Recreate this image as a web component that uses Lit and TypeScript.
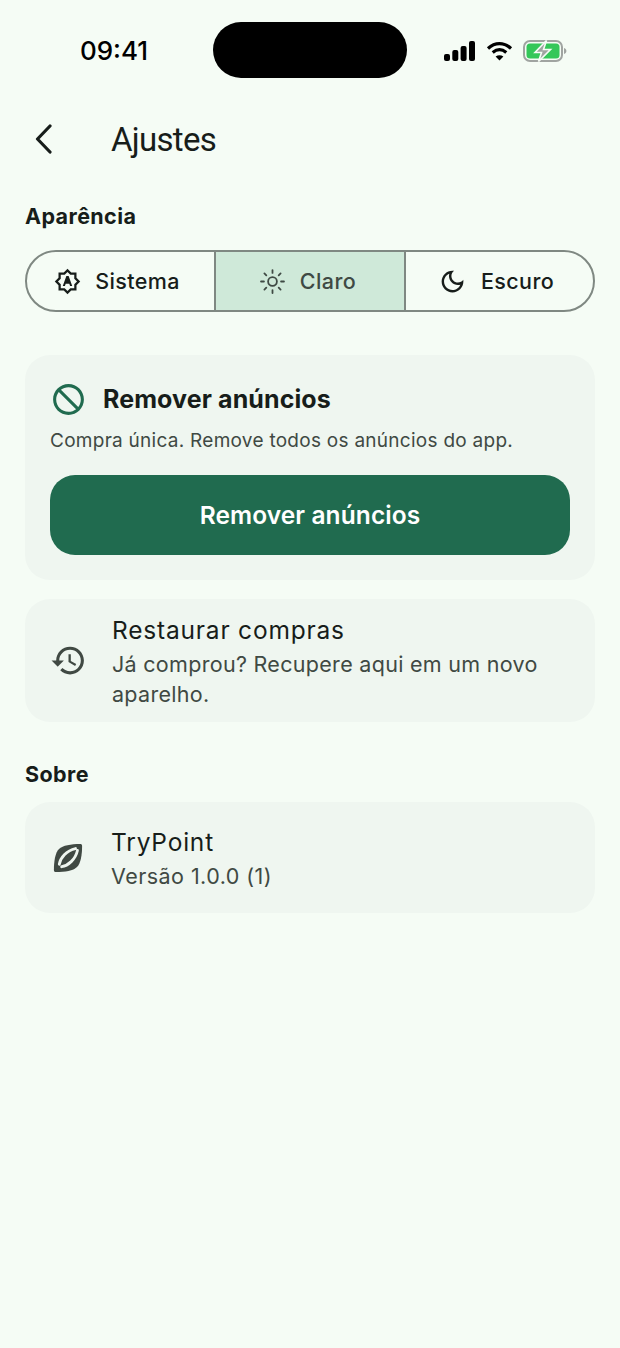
import { LitElement, html, css } from "lit";
import { customElement } from "lit/decorators.js";

const P = {
  auto: "M10.85 12.65h2.3L12 9l-1.15 3.65zM20 8.69V4h-4.69L12 .69 8.69 4H4v4.69L.69 12 4 15.31V20h4.69L12 23.31 15.31 20H20v-4.69L23.31 12 20 8.69zm-2 5.79V18h-3.52L12 20.48 9.52 18H6v-3.52L3.52 12 6 9.52V6h3.52L12 3.52 14.48 6H18v3.52L20.48 12 18 14.48zM11 7l-3.2 9h1.9l.7-2h3.2l.7 2h1.9L13 7h-2z",
  moon: "M9.37 5.51c-.18.64-.27 1.31-.27 1.99 0 4.08 3.32 7.4 7.4 7.4.68 0 1.35-.09 1.99-.27C17.45 17.19 14.93 19 12 19c-3.86 0-7-3.14-7-7 0-2.93 1.81-5.45 4.37-6.49zM12 3c-4.97 0-9 4.03-9 9s4.03 9 9 9 9-4.03 9-9c0-.46-.04-.92-.1-1.36-.98 1.37-2.58 2.26-4.4 2.26-2.98 0-5.4-2.42-5.4-5.4 0-1.81.89-3.42 2.26-4.4-.44-.06-.9-.1-1.36-.1z",
  block: "M12 2C6.48 2 2 6.48 2 12s4.48 10 10 10 10-4.48 10-10S17.52 2 12 2zM4 12c0-4.42 3.58-8 8-8 1.85 0 3.55.63 4.9 1.69L5.69 16.9C4.63 15.55 4 13.85 4 12zm8 8c-1.85 0-3.55-.63-4.9-1.69L18.31 7.1C19.37 8.45 20 10.15 20 12c0 4.42-3.58 8-8 8z",
  restore: "M13 3c-4.97 0-9 4.03-9 9H1l3.89 3.89.07.14L9 12H6c0-3.87 3.13-7 7-7s7 3.13 7 7-3.13 7-7 7c-1.93 0-3.68-.79-4.94-2.06l-1.42 1.42C8.27 19.99 10.51 21 13 21c4.97 0 9-4.03 9-9s-4.03-9-9-9zm-1 5v5l4.28 2.54.72-1.21-3.5-2.08V8H12z",
};

const fill = (d: string, size: number, color: string) => html`<svg class="ic" width=${size} height=${size} viewBox="0 0 24 24" fill=${color}><path d=${d}></path></svg>`;

const block = html`<svg class="ic" width="37" height="37" viewBox="0 0 24 24" fill="#206b4f"><path transform="matrix(-1 0 0 1 24 0)" d=${P.block}></path></svg>`;

const sun = html`<svg class="ic" width="27" height="27" viewBox="0 0 24 24" fill="none" stroke="#3f4a44" stroke-width="1.600" stroke-linecap="round"><circle cx="12" cy="12" r="3.900"></circle><path d="M12 1.800v2.600M12 19.600v2.600M1.800 12h2.600M19.600 12h2.600M4.800 4.800l1.700 1.700M17.500 17.500l1.700 1.700M19.200 4.800l-1.700 1.700M6.500 17.500l-1.700 1.700"></path></svg>`;

const ball = html`<svg class="ic" width="36" height="36" viewBox="0 0 24 24"><path fill="#404943" d="M20 2.600C21 2.600 21.400 3 21.400 4 21.400 10 20.500 15.500 18 18 15.500 20.500 10 21.400 4 21.400 3 21.400 2.600 21 2.600 20 2.600 14 3.500 8.500 6 6 8.500 3.500 14 2.600 20 2.600Z"></path><path fill="none" stroke="#eff6f0" stroke-width="1.900" stroke-linecap="round" d="M6.200 16.200C6.800 12 11 7 17 5.700M7.800 17.800C12 17.200 17 13 18.300 7"></path></svg>`;

@customElement("app-root")
export class AppRoot extends LitElement {
  static styles = css`
    :host { display: block; width: 620px; height: 1348px; background: #f5fcf5; color: #171d1a; font-family: Inter, "Liberation Sans", sans-serif; overflow: hidden; }
    .ic { display: block; flex: none; }
    .status { display: grid; grid-template-columns: 213px 194px 213px; height: 56px; padding-top: 22px; }
    .time { font: 500 26px/58px Inter, sans-serif; color: #000; text-align: center; box-sizing: border-box; width: 228px; }
    .island { background: #000; border-radius: 28px; height: 56px; }
    .sys { display: flex; align-items: center; gap: 10.500px; padding-left: 37px; margin-top: -1px; }
    .header { display: flex; align-items: center; height: 64px; margin-top: 29px; padding-left: 35px; }
    .back { width: 76px; flex: none; }
    .title { font-family: Roboto, sans-serif; font-size: 33px; font-weight: 400; letter-spacing: -0.7px; line-height: 40px; margin-top: 2px; }
    .content { padding: 0 25px; }
    .sec { font-size: 21.500px; font-weight: 700; line-height: 28px; letter-spacing: 0.4px; }
    .sec.a { margin-top: 31px; }
    .sec.b { margin-top: 38px; }
    .seg { display: grid; grid-template-columns: 189px 190px 1fr; height: 62px; margin-top: 20px; box-sizing: border-box; border: 2px solid #7f8882; border-radius: 31px; overflow: hidden; }
    .opt { display: flex; align-items: center; justify-content: center; gap: 14px; font-size: 21.500px; font-weight: 500; letter-spacing: 0.4px; padding-right: 7px; }
    .opt:first-child { padding-right: 9px; }
    .opt + .opt { box-shadow: -2px 0 0 #7f8882; }
    .opt.on { background: #cfe9d9; color: #3f4a44; }
    .card { background: #eff6f0; border-radius: 25px; }
    .promo { margin-top: 43px; padding: 25px 25px; height: 225px; box-sizing: border-box; }
    .promo-h { display: flex; align-items: center; gap: 16px; height: 38px; }
    .promo-t { font-size: 25px; font-weight: 700; letter-spacing: 0.1px; }
    .promo-d { font-size: 19px; color: #404943; letter-spacing: 0.27px; margin-top: 9px; line-height: 28px; }
    .btn { margin-top: 20px; height: 80px; border-radius: 25px; background: #206b4f; color: #fff; display: flex; align-items: center; justify-content: center; font-size: 24.500px; font-weight: 600; letter-spacing: 0.1px; }
    .row { display: flex; align-items: center; padding: 0 25px; gap: 25px; }
    .restore { margin-top: 19px; height: 123px; }
    .restore .txt { padding-top: 3px; }
    .restore .rd { margin-top: 3px; }
    .about { margin-top: 14px; height: 111px; }
    .about .txt { padding-top: 3px; }
    .about .rd { margin-top: 3px; letter-spacing: 0.45px; }
    .rt { font-size: 24.500px; line-height: 31px; letter-spacing: 0.8px; }
    .rd { font-size: 21.500px; line-height: 30px; letter-spacing: 0.3px; color: #404943; }
  `;

  render() {
    return html`
      <div class="status">
        <div class="time">09:41</div>
        <div class="island"></div>
        <div class="sys">
          <svg width="31" height="20" viewBox="0 0 31 20" fill="#000"><rect x="0" y="13" width="6" height="7" rx="2"></rect><rect x="8.300" y="9" width="6" height="11" rx="2"></rect><rect x="16.600" y="5" width="6" height="15" rx="2"></rect><rect x="25" y="0" width="6" height="20" rx="2"></rect></svg>
          <svg width="27" height="20" viewBox="0 0 27 20" fill="none" stroke="#000" stroke-width="3.200"><path d="M2 7.500C9 1 18 1 25 7.500"></path><path d="M6.700 11.500C11 7.800 16 7.800 20.300 11.500"></path><path d="M13.500 19.500L9.600 15.400C12 13.700 15 13.700 17.400 15.400Z" fill="#000" stroke="none"></path></svg>
          <svg width="44" height="22" viewBox="0 0 44 22" fill="none"><rect x="1" y="1" width="38" height="20" rx="6" stroke="#a0a4a1" stroke-width="2"></rect><rect x="3.500" y="3.500" width="33" height="15" rx="3.500" fill="#34c759"></rect><path d="M41 8v6c1.600-.5 2.400-1.600 2.400-3S42.600 8.500 41 8Z" fill="#a0a4a1"></path><path d="M23.500 0.500L12 12.500h6.500L15.500 21.500 27.500 9.500h-7Z" fill="#a0a4a1" stroke="#f5fcf5" stroke-width="1.600"></path></svg>
        </div>
      </div>
      <div class="header">
        <div class="back"><svg class="ic" width="17" height="30" viewBox="0 0 17 30" fill="none" stroke="#171d1a" stroke-width="3.200" stroke-linecap="round" stroke-linejoin="round"><path d="M15 2L2.500 15 15 28"></path></svg></div>
        <div class="title">Ajustes</div>
      </div>
      <div class="content">
        <div class="sec a">Aparência</div>
        <div class="seg">
          <div class="opt">${fill(P.auto, 27, "#171d1a")}<span>Sistema</span></div>
          <div class="opt on">${sun}<span>Claro</span></div>
          <div class="opt">${fill(P.moon, 29, "#171d1a")}<span>Escuro</span></div>
        </div>
        <div class="card promo">
          <div class="promo-h">${block}<span class="promo-t">Remover anúncios</span></div>
          <div class="promo-d">Compra única. Remove todos os anúncios do app.</div>
          <div class="btn">Remover anúncios</div>
        </div>
        <div class="card row restore">
          ${fill(P.restore, 37, "#404943")}
          <div class="txt"><div class="rt">Restaurar compras</div><div class="rd">Já comprou? Recupere aqui em um novo aparelho.</div></div>
        </div>
        <div class="sec b">Sobre</div>
        <div class="card row about">
          ${ball}
          <div class="txt"><div class="rt">TryPoint</div><div class="rd">Versão 1.0.0 (1)</div></div>
        </div>
      </div>
    `;
  }
}
